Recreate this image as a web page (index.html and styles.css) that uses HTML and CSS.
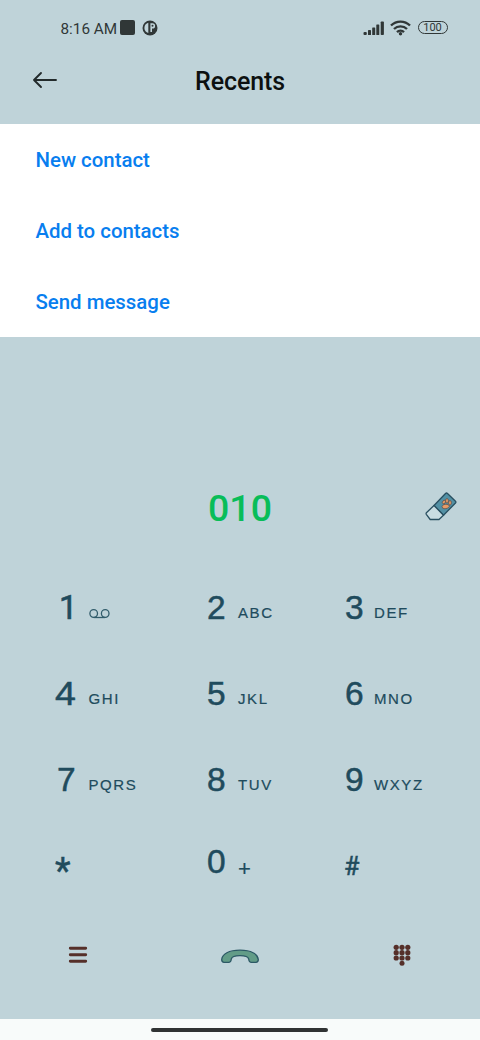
FILE: index.html
```html
<!DOCTYPE html>
<html lang="en">
<head>
<meta charset="utf-8">
<title>Recents</title>
<link rel="stylesheet" href="styles.css">
</head>
<body>
<main class="phone">
  <header class="status">
    <span class="time">8:16 AM</span>
    <span class="square"></span>
    <svg class="app" width="16" height="16" viewBox="0 0 16 16"><circle cx="8" cy="8" r="7.500" fill="#303737"/><path d="M6.300 2.800C4 3.300 2.400 5.400 2.400 8s1.600 4.200 3.900 4.900z" fill="#bfd3d9"/><path d="M8.400 3.200h2a2.700 2.700 0 0 1 0 5.400H10V12H8.400z" fill="#bfd3d9"/><circle cx="10.500" cy="5.800" r="1" fill="#303737"/></svg>
    <svg class="signal" width="23" height="15" viewBox="0 0 23 15" fill="#303737"><rect x=".5" y="11" width="3.300" height="3" rx="1"/><rect x="5" y="9" width="3" height="5" rx=".6"/><rect x="9.200" y="6.500" width="3" height="7.500" rx=".6"/><rect x="13.300" y="3.500" width="3" height="10.500" rx=".6"/><rect x="17.700" y=".5" width="3.200" height="13.500" rx=".8"/></svg>
    <svg class="wifi" width="21" height="16" viewBox="0 0 21 16" fill="none" stroke="#303737" stroke-width="2.400"><path d="M1 5.500a13.500 13.500 0 0 1 19 0M4 9a9.300 9.300 0 0 1 13 0M7 12.100a5 5 0 0 1 7 0"/><circle cx="10.500" cy="13.700" r="1.700" fill="#303737" stroke="none"/></svg>
    <span class="battery">100</span>
  </header>
  <div class="titlebar">
    <svg class="back" width="26" height="18" viewBox="0 0 26 18" fill="none" stroke="#222a2b" stroke-width="1.900" stroke-linecap="round" stroke-linejoin="round"><path d="M24 9H2M9 2L2 9l7 7"/></svg>
    <h1>Recents</h1>
  </div>
  <nav class="actions">
    <a>New contact</a>
    <a>Add to contacts</a>
    <a>Send message</a>
  </nav>
  <section class="entry">
    <output>010</output>
    <svg class="eraser" width="32" height="30" viewBox="0 0 32 30" stroke="#294f60" stroke-width="1.300" stroke-linejoin="round"><path d="M20.500 1.500Q21.500.6 22.500 1.500L30.500 9.200Q31.300 10 30.500 11L18.500 23.200 9 13.500z" fill="#5290a4"/><path d="M9 13.500L1.400 20.700Q.8 21.500 1.300 22.300L5.200 27.500H14L18.500 23.200z" fill="#c9dde2"/><g fill="#e69b67" stroke="#594b48" stroke-width=".7"><path d="M17 14.500q1-2.500 4-2.300t3.500 2q-1.300 2.600-4.500 2.600-3 0-3-2.300z"/><ellipse cx="19" cy="10" rx="1.400" ry="2" transform="rotate(35 19 10)"/><ellipse cx="22" cy="8.800" rx="1.400" ry="2.300"/><ellipse cx="25" cy="10.800" rx="1.400" ry="2.300"/></g></svg>
  </section>
  <section class="keypad">
    <div class="key one"><b>1</b><svg width="22" height="10" viewBox="0 0 22 10" fill="none" stroke="#315c6b" stroke-width="1.300"><circle cx="4.700" cy="4.500" r="3.800"/><circle cx="16.200" cy="4.500" r="3.800"/><path d="M4.700 8.500h11.500"/></svg></div>
    <div class="key"><b>2</b><span>ABC</span></div>
    <div class="key"><b>3</b><span>DEF</span></div>
    <div class="key four"><b>4</b><span>GHI</span></div>
    <div class="key"><b>5</b><span>JKL</span></div>
    <div class="key"><b>6</b><span>MNO</span></div>
    <div class="key seven"><b>7</b><span>PQRS</span></div>
    <div class="key"><b>8</b><span>TUV</span></div>
    <div class="key"><b>9</b><span>WXYZ</span></div>
    <div class="key star"><b>*</b></div>
    <div class="key zero"><b>0</b><span class="plus">+</span></div>
    <div class="key hash"><b>#</b></div>
  </section>
  <footer class="tools">
    <svg class="menu" width="20" height="18" viewBox="0 0 20 18" stroke="#552f29" stroke-width="2.900" stroke-linecap="round"><path d="M2.300 2.200h15.400M2.300 8.700h15.400M2.300 15.200h15.400"/></svg>
    <svg class="call" width="40" height="15" viewBox="0 0 40 15" fill="#629c87" stroke="#2c5965" stroke-width="1.300" stroke-linejoin="round"><path d="M1.700 10.500C2.200 4.800 9 1.200 20 1.200S37.800 4.800 38.300 10.500Q38.300 13.300 36 13.300H31Q28.900 13 28.700 10 28 6.700 20 6.700T11.300 10Q11.100 13 9 13.300H4Q1.700 13.300 1.700 10.500z"/></svg>
    <svg class="dots" width="18" height="22" viewBox="0 0 18 22" fill="#552f29"><circle cx="3.200" cy="3.300" r="2.600"/><circle cx="9" cy="3.300" r="2.600"/><circle cx="14.800" cy="3.300" r="2.600"/><circle cx="3.200" cy="8.700" r="2.600"/><circle cx="9" cy="8.700" r="2.600"/><circle cx="14.800" cy="8.700" r="2.600"/><circle cx="3.200" cy="14" r="2.600"/><circle cx="9" cy="14" r="2.600"/><circle cx="14.800" cy="14" r="2.600"/><circle cx="9" cy="19.300" r="2.500"/></svg>
  </footer>
  <div class="gesture"><i></i></div>
</main>
</body>
</html>
```
FILE: styles.css
```css
* { box-sizing: border-box; }
body { margin: 0; background: #fff; font-family: Roboto, sans-serif; }
.phone { width: 480px; height: 1040px; background: #bfd3d9; overflow: hidden; }
svg { display: block; flex: none; }
.status { height: 56px; display: flex; align-items: center; padding-left: 60.500px; color: #303737; }
.time { font-size: 15.300px; width: 59.500px; white-space: nowrap; line-height: 20px; padding-top: 1px; }
.square { width: 15px; height: 15px; margin-top: -1px; background: #303737; border-radius: 2px; }
.app { margin-left: 7px; margin-top: -1px; }
.signal { margin-left: 205px; }
.wifi { margin-left: 3.500px; margin-top: -1px; }
.battery { width: 30px; height: 13px; margin-left: 7px; margin-top: -1px; border: 1px solid #303737; border-radius: 7px; font-size: 11px; line-height: 11.500px; text-align: center; font-weight: 400; }
.titlebar { height: 67.500px; display: grid; grid-template-columns: 90px 300px 90px; align-items: center; padding-bottom: 19px; }
.back { margin-left: 32px; }
h1 { margin: 0; font-size: 25px; line-height: 30px; font-weight: 500; text-align: center; color: #0c1010; letter-spacing: -.1px; padding-top: 3px; }
.actions { height: 213.500px; background: #fff; display: grid; grid-template-rows: repeat(3, 71px); align-items: center; padding: 1px 0 0 35.500px; color: #087eef; font-size: 20.400px; font-weight: 500; }
.entry { height: 241px; padding: 141px 0 0 90px; display: grid; grid-template-columns: 300px 90px; align-items: center; align-content: start; }
.entry output { font-size: 37.500px; line-height: 60px; font-weight: 500; text-align: center; color: #08bd59; }
.eraser { margin-left: 35px; margin-top: -3px; }
.keypad { display: grid; grid-template-columns: 152px 138px 136px; grid-template-rows: 86px 86px 86px 83px; padding-left: 54px; height: 343px; color: #204b5d; font-family: "Liberation Sans", Arial, sans-serif; }
.key { display: flex; align-items: baseline; height: 60px; }
.key b { width: 34.500px; font-size: 33.500px; line-height: 60px; font-weight: 400; -webkit-text-stroke: .5px #204b5d; text-indent: 1px; }
.key:nth-child(3n+2) b { width: 32px; }
.key:nth-child(3n) b { width: 30px; }
.key.one b { font-family: Roboto, sans-serif; font-size: 33px; text-indent: 5px; -webkit-text-stroke: .6px #204b5d; }
.key.four b { transform: scaleX(1.12); transform-origin: left; }
.key.seven b { text-indent: 3px; }
.key span { font-size: 15px; letter-spacing: 1.600px; -webkit-text-stroke: .2px #204b5d; padding-bottom: 2px; transform: translateY(-1px); }
.zero { margin-top: -4px; }
.key .plus { font-size: 22px; line-height: 1; align-self: flex-start; margin-top: 27px; letter-spacing: 0; }
.star { padding-top: 5px; }
.key.star b { font-family: Roboto, sans-serif; font-size: 36px; line-height: 60px; }
.hash { padding-top: 1px; }
.key.hash b { font-family: Roboto, sans-serif; font-size: 25px; text-indent: 0; }
.tools { height: 98px; display: grid; grid-template-columns: 220px 172px 88px; align-items: start; padding-top: 26px; }
.menu { margin-left: 68px; margin-top: -1px; }
.call { margin-top: 2px; }
.dots { margin-left: 1px; margin-top: -3px; }
.gesture { height: 21px; background: #f8fbfa; padding: 9px 0 0 151px; }
.gesture i { display: block; width: 177px; height: 4px; border-radius: 2px; background: #303333; }
```
